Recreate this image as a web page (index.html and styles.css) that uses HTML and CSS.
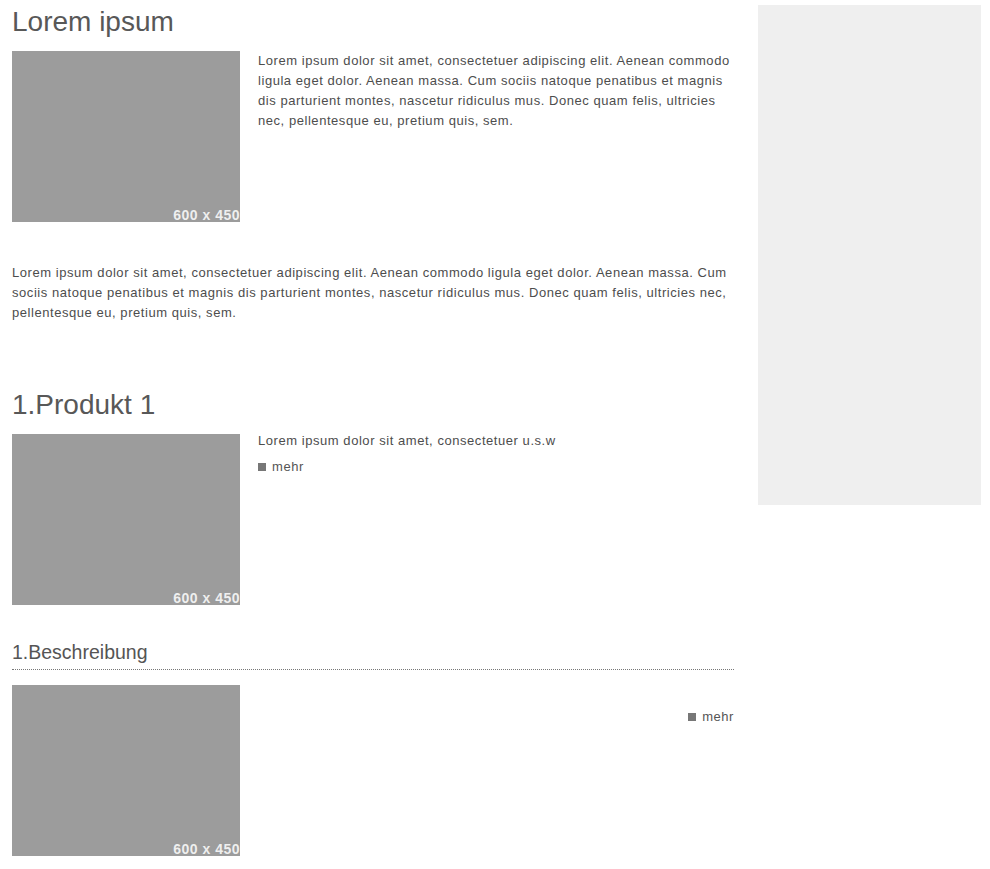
FILE: index.html
```html
<!DOCTYPE html>
<html lang="de">
<head>
<meta charset="utf-8">
<title>Lorem ipsum</title>
<link rel="stylesheet" href="styles.css">
</head>
<body>
<div class="page">
  <main class="main">
    <h1 class="title">Lorem ipsum</h1>
    <div class="media">
      <div class="placeholder"><span class="placeholder-label">600 x 450</span></div>
      <p class="media-text">Lorem ipsum dolor sit amet, consectetuer adipiscing elit. Aenean commodo ligula eget dolor. Aenean massa. Cum sociis natoque penatibus et magnis dis parturient montes, nascetur ridiculus mus. Donec quam felis, ultricies nec, pellentesque eu, pretium quis, sem.</p>
    </div>
    <p class="intro">Lorem ipsum dolor sit amet, consectetuer adipiscing elit. Aenean commodo ligula eget dolor. Aenean massa. Cum sociis natoque penatibus et magnis dis parturient montes, nascetur ridiculus mus. Donec quam felis, ultricies nec, pellentesque eu, pretium quis, sem.</p>

    <h2 class="title product-title">1.Produkt 1</h2>
    <div class="media">
      <div class="placeholder"><span class="placeholder-label">600 x 450</span></div>
      <div class="media-body">
        <p class="media-text product-text">Lorem ipsum dolor sit amet, consectetuer u.s.w</p>
        <a class="more" href="#"><span class="more-square"></span>mehr</a>
      </div>
    </div>

    <h3 class="subtitle">1.Beschreibung</h3>
    <div class="media">
      <div class="placeholder"><span class="placeholder-label">600 x 450</span></div>
      <div class="media-body media-body-right">
        <a class="more" href="#"><span class="more-square"></span>mehr</a>
      </div>
    </div>
  </main>
  <aside class="sidebar"></aside>
</div>
</body>
</html>
```
FILE: styles.css
```css
* { box-sizing: border-box; }

body {
  margin: 0;
  background: #ffffff;
  font-family: "Liberation Sans", Arial, sans-serif;
  font-size: 13px;
  line-height: 20px;
  letter-spacing: 0.55px;
  color: #4d4d4d;
}

.page {
  display: flex;
  align-items: flex-start;
  gap: 24px;
  padding: 5px 0 0 12px;
}

.main {
  width: 722px;
  flex: none;
}

.sidebar {
  width: 223px;
  height: 500px;
  flex: none;
  background: #efefef;
}

.title {
  margin: 1px 0 13px;
  font-size: 28px;
  line-height: 32px;
  font-weight: normal;
  letter-spacing: 0;
  color: #585858;
}

.product-title {
  margin-top: 66px;
}

.media {
  display: flex;
  gap: 18px;
}

.placeholder {
  width: 228px;
  height: 171px;
  flex: none;
  background: #9c9c9c;
  display: flex;
  align-items: flex-end;
  justify-content: flex-end;
}

.placeholder-label {
  font-size: 14px;
  line-height: 16px;
  font-weight: bold;
  letter-spacing: 0.5px;
  color: rgba(255, 255, 255, 0.85);
  margin-bottom: -1px;
}

.media-text {
  margin: 0;
}

.media-body {
  flex: 1;
  display: flex;
  flex-direction: column;
  align-items: flex-start;
}

.media-body-right {
  align-items: flex-end;
  padding-top: 22px;
}

.product-text {
  margin-top: -3px;
}

.intro {
  margin: 41px 0 0;
}

.more {
  display: inline-flex;
  align-items: baseline;
  gap: 6px;
  margin-top: 6px;
  color: #555555;
  text-decoration: none;
}

.media-body-right .more {
  margin-top: 0;
}

.more-square {
  display: inline-block;
  width: 8px;
  height: 8px;
  background: #777777;
}

.subtitle {
  margin: 35px 0 15px;
  padding-bottom: 5px;
  border-bottom: 1px dotted #777777;
  font-size: 19.5px;
  line-height: 24px;
  font-weight: normal;
  letter-spacing: 0;
  color: #555555;
}
```
